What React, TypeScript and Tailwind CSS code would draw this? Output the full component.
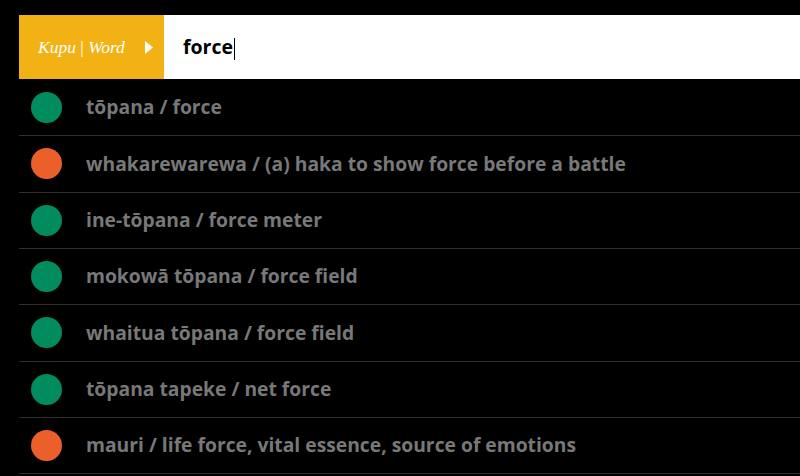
const results = [
  { color: "green", text: "tōpana / force" },
  { color: "orange", text: "whakarewarewa / (a) haka to show force before a battle" },
  { color: "green", text: "ine-tōpana / force meter" },
  { color: "green", text: "mokowā tōpana / force field" },
  { color: "green", text: "whaitua tōpana / force field" },
  { color: "green", text: "tōpana tapeke / net force" },
  { color: "orange", text: "mauri / life force, vital essence, source of emotions" },
];

export default function App() {
  return (
    <div className="h-[476px] w-[800px] overflow-hidden bg-black pt-[15px] pl-[19px] font-['Open_Sans',sans-serif]">
      <div className="flex h-[64px]">
        <div className="flex w-[145px] items-center bg-[#f2b215] pl-[19px]">
          <span className="font-['Liberation_Serif',serif] text-[17.5px] italic text-white">
            Kupu <span className="not-italic font-light">|</span> Word
          </span>
          <svg width="9" height="13" viewBox="0 0 9 13" className="ml-[20px]">
            <path d="M0 0 L8 6.5 L0 13 Z" fill="#fff" />
          </svg>
        </div>
        <div className="flex flex-1 items-center bg-white pl-[19px]">
          <span className="text-[19.5px] font-bold leading-none text-black">force</span>
          <span className="ml-[1px] mt-[4px] h-[22px] w-px bg-black" />
        </div>
      </div>
      <ul className="pt-px">
        {results.map((r) => (
          <li
            key={r.text}
            className="flex h-[56.33px] items-center border-b border-[#2e2e2e]"
          >
            <span
              className={
                r.color === "green"
                  ? "ml-[12px] h-[31px] w-[31px] shrink-0 rounded-full bg-[#008c5f]"
                  : "ml-[12px] h-[31px] w-[31px] shrink-0 rounded-full bg-[#ea5f2a]"
              }
            />
            <span className="ml-[24px] text-[19.3px] font-bold text-[#787878]">{r.text}</span>
          </li>
        ))}
      </ul>
    </div>
  );
}
